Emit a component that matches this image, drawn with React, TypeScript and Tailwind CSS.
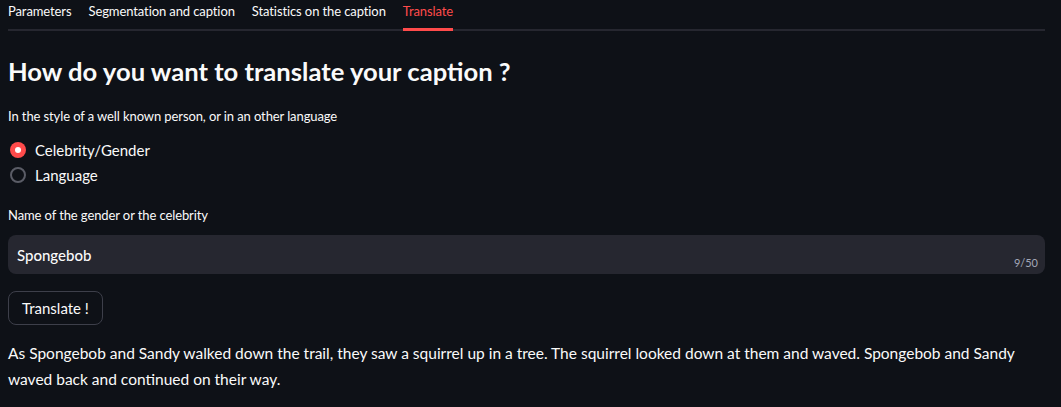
import { useState } from "react";

const tabs = ["Parameters", "Segmentation and caption", "Statistics on the caption", "Translate"];

export default function App() {
  const [choice, setChoice] = useState("Celebrity/Gender");
  const [name, setName] = useState("Spongebob");

  return (
    <div
      className="min-h-[407px] w-full bg-[#0e1117] pl-2 pr-4 text-[#fafafa]"
      style={{ fontFamily: "Lato, 'Noto Sans', sans-serif" }}
    >
      <div className="flex gap-[17px] border-b-2 border-[#262730]">
        {tabs.map((t) => (
          <div
            key={t}
            className={`-mb-[2px] border-b-[3px] pb-[7px] pt-[1px] text-[13px] leading-[20px] tracking-[-0.1px] ${
              t === "Translate" ? "border-[#ff4b4b] text-[#ff4b4b]" : "border-transparent"
            }`}
          >
            {t}
          </div>
        ))}
      </div>

      <h1 className="mt-[20px] text-[25.6px] font-bold leading-[40px]">How do you want to translate your caption ?</h1>

      <p className="mt-[16px] text-[13px] leading-[18px] tracking-[-0.1px]">
        In the style of a well known person, or in an other language
      </p>

      <div className="mt-[15px] flex flex-col gap-[5px]">
        {["Celebrity/Gender", "Language"].map((opt) => (
          <label
            key={opt}
            className="flex cursor-pointer items-center gap-[9px] pl-[2px] text-[15px] leading-[20px]"
            onClick={() => setChoice(opt)}
          >
            {choice === opt ? (
              <span className="flex h-4 w-4 items-center justify-center rounded-full bg-[#ff4b4b]">
                <span className="h-[6px] w-[6px] rounded-full bg-white" />
              </span>
            ) : (
              <span className="h-4 w-4 rounded-full border-2 border-[#5a5c66]" />
            )}
            {opt}
          </label>
        ))}
      </div>

      <p className="mt-[21px] text-[13px] leading-[18px] tracking-[-0.1px]">Name of the gender or the celebrity</p>

      <div className="relative mt-[11px] h-[39px] rounded-lg bg-[#262730]">
        <input
          value={name}
          onChange={(e) => setName(e.target.value)}
          className="h-full w-full bg-transparent px-[9px] text-[15px] font-medium text-[#fafafa] outline-none"
          style={{ fontFamily: "inherit" }}
        />
        <span className="absolute bottom-[3px] right-[7px] text-[11px] text-[#a3a8b8]">{name.length}/50</span>
      </div>

      <div className="mt-[17px] flex">
        <button className="h-[34px] rounded-lg border border-[#3d3f4a] px-[13px] text-[15px] leading-[20px] text-[#fafafa]">
          Translate !
        </button>
      </div>

      <p className="mt-[15px] text-[15.5px] leading-[26px]">
        As Spongebob and Sandy walked down the trail, they saw a squirrel up in a tree. The squirrel looked down at them and
        waved. Spongebob and Sandy waved back and continued on their way.
      </p>
    </div>
  );
}
